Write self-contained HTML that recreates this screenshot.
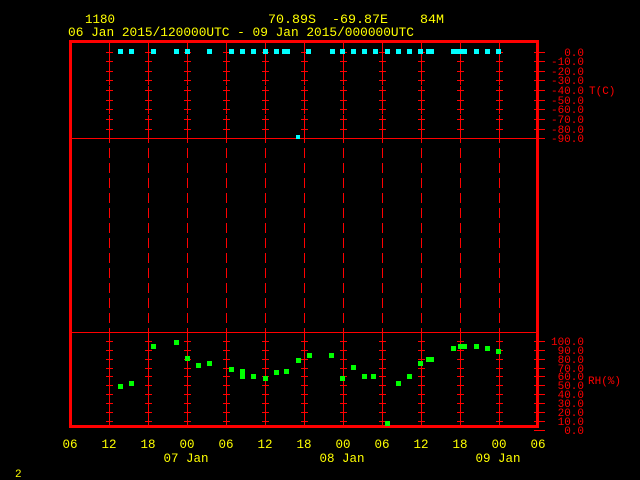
<!DOCTYPE html>
<html><head><meta charset="utf-8"><style>
html,body{margin:0;padding:0;background:#000;width:640px;height:480px;overflow:hidden}
svg text{font-family:"Liberation Mono","DejaVu Sans Mono",monospace}
</style></head><body>
<svg id="s" width="640" height="480" xmlns="http://www.w3.org/2000/svg" shape-rendering="crispEdges">
<rect width="640" height="480" fill="#000"/>
<g fill="#ffff00" font-size="12.5">
<text x="85" y="23" textLength="30" lengthAdjust="spacingAndGlyphs">1180</text>
<text x="268" y="23" textLength="48" lengthAdjust="spacingAndGlyphs">70.89S</text>
<text x="332" y="23" textLength="56" lengthAdjust="spacingAndGlyphs">-69.87E</text>
<text x="420" y="23" textLength="24" lengthAdjust="spacingAndGlyphs">84M</text>
<text x="68" y="36" textLength="346" lengthAdjust="spacingAndGlyphs">06 Jan 2015/120000UTC - 09 Jan 2015/000000UTC</text>
<text x="15" y="477" font-size="11">2</text>
</g>
<g id="g"></g>
</svg>
<script>
var g=document.getElementById('g'),h='';
var xs=[109,148,187,226,265,304,343,382,421,460,499];
function R(x,y,w,hh,c){h+='<rect x="'+x+'" y="'+y+'" width="'+w+'" height="'+hh+'" fill="'+(c||'#f00')+'"/>';}
R(69,40,470,3);R(69,425,470,3);R(69,40,3,388);R(536,40,3,388);
R(70,138,475,1);R(70,332,468,1);
xs.forEach(function(x){for(var y=43;y<425;y+=15)R(x,y,1,Math.min(10,425-y));});
var ty=[],ry=[];
for(var i=0;i<10;i++)ty.push(Math.round(51.5+i*9.65));
for(var i=0;i<11;i++)ry.push(Math.round(341+i*8.87));
function cross(x,y){R(x-3,y,7,1);R(x,y-4,1,9);}
xs.forEach(function(x){ty.forEach(function(y){cross(x,y)});ry.forEach(function(y){if(y<425)cross(x,y)});});
ty.forEach(function(y){R(534,y,11,1);});
ry.forEach(function(y){R(534,y,11,1);});
h+='<g fill="#f00" font-size="11" text-anchor="end">';
ty.forEach(function(y,i){h+='<text x="584" y="'+(y+4)+'">'+(i==0?'0.0':'-'+(i*10)+'.0')+'</text>';});
ry.forEach(function(y,i){h+='<text x="584" y="'+(y+4)+'">'+((100-i*10)+'.0')+'</text>';});
h+='</g><g fill="#f00" font-size="11"><text x="589" y="94">T(C)</text><text x="588" y="384">RH(%)</text></g>';
var cx=[120,131,153,176,187,209,231,242,253,265,276,284,287,308,332,342,353,364,375,387,398,409,420,428,431,453,457,461,464,476,487,498];
cx.forEach(function(x){R(x-2,49,5,5,'#00ffff');});
R(296,135,4,4,'#00ffff');
var gp=[[120,386],[131,383],[153,346],[176,342],[187,358],[198,365],[209,363],[231,369],[242,371],[242,376],[253,376],[265,378],[276,372],[286,371],[298,360],[309,355],[331,355],[342,378],[353,367],[364,376],[373,376],[387,423],[398,383],[409,376],[420,363],[428,359],[431,359],[453,348],[460,346],[464,346],[476,346],[487,348],[498,351]];
gp.forEach(function(p){R(p[0]-2,p[1]-2,5,5,'#00ff00');});
h+='<g fill="#ffff00" font-size="12.5" text-anchor="middle">';
var lb=['06','12','18','00','06','12','18','00','06','12','18','00','06'];
lb.forEach(function(t,i){h+='<text x="'+(70+i*39)+'" y="448">'+t+'</text>';});
h+='<text x="186" y="462">07 Jan</text><text x="342" y="462">08 Jan</text><text x="498" y="462">09 Jan</text></g>';
g.innerHTML=h;
</script>
</body></html>
